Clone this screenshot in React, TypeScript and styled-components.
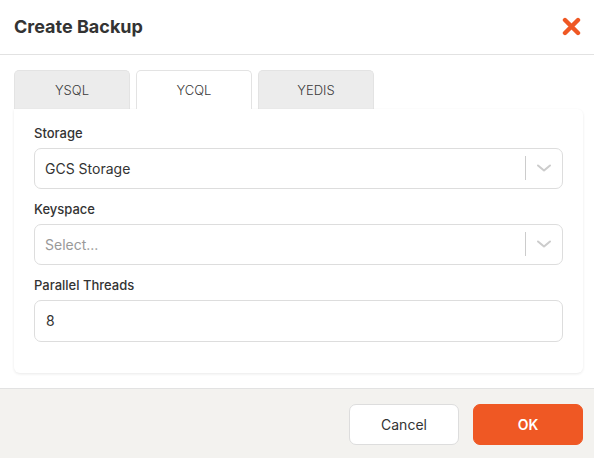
import React from 'react';
import styled, { createGlobalStyle } from 'styled-components';

const GlobalStyle = createGlobalStyle`
  html, body {
    margin: 0;
    padding: 0;
    background: #ffffff;
  }
  body {
    font-family: Inter, "Noto Sans", "Liberation Sans", sans-serif;
    color: #333333;
  }
  * {
    box-sizing: border-box;
  }
`;

const Modal = styled.div`
  width: 594px;
  height: 458px;
  display: flex;
  flex-direction: column;
  background: #ffffff;
`;

const Header = styled.div`
  height: 55px;
  display: flex;
  align-items: center;
  justify-content: space-between;
  padding: 0 13px 0 14px;
  border-bottom: 1px solid #e2e2e2;
`;

const Title = styled.h4`
  margin: 0;
  font-size: 18px;
  font-weight: 700;
  color: #333333;
`;

const CloseButton = styled.button`
  width: 20px;
  height: 20px;
  padding: 0;
  border: none;
  background: transparent;
  display: flex;
  align-items: center;
  justify-content: center;
  cursor: pointer;
`;

const Body = styled.div`
  flex: 1;
  padding: 15px 11px 15px 14px;
  display: flex;
  flex-direction: column;
`;

const TabList = styled.div`
  display: flex;
  gap: 6px;
  height: 39px;
`;

const Tab = styled.button<{ $active?: boolean }>`
  width: 116px;
  height: 39px;
  border: 1px solid #e3e3e3;
  border-bottom: none;
  border-radius: 5px 5px 0 0;
  background: ${({ $active }) => ($active ? '#ffffff' : '#ececec')};
  font-family: inherit;
  font-size: 13px;
  font-weight: 300;
  color: #3a3a3a;
  cursor: pointer;
  padding: 0;
  position: relative;
  z-index: ${({ $active }) => ($active ? 2 : 0)};
`;

const Panel = styled.div`
  background: #ffffff;
  border-radius: 0 6px 6px 6px;
  box-shadow: 0 1px 3px rgba(0, 0, 0, 0.09);
  padding: 16px 20px 19px 20px;
  position: relative;
  z-index: 1;
`;

const Field = styled.div`
  margin-bottom: 12px;
`;

const Label = styled.label`
  display: block;
  font-size: 13px;
  font-weight: 500;
  line-height: 16px;
  color: #333333;
  margin-bottom: 7px;
`;

const SelectBox = styled.div`
  height: 41px;
  border: 1px solid #dddddd;
  border-radius: 7px;
  display: flex;
  align-items: center;
  background: #ffffff;
`;

const SelectValue = styled.div<{ $placeholder?: boolean }>`
  flex: 1;
  padding-left: 10px;
  font-size: 14px;
  color: ${({ $placeholder }) => ($placeholder ? '#999999' : '#333333')};
`;

const Divider = styled.span`
  width: 1px;
  height: 24px;
  background: #cccccc;
`;

const Indicator = styled.span`
  width: 36px;
  display: flex;
  align-items: center;
  justify-content: center;
`;

const Input = styled.input`
  width: 100%;
  height: 42px;
  border: 1px solid #dddddd;
  border-radius: 7px;
  padding: 0 11px;
  font-family: inherit;
  font-size: 14px;
  color: #333333;
  outline: none;
`;

const Footer = styled.div`
  height: 71px;
  background: #f3f2ef;
  border-top: 1px solid #e2e2e2;
  display: flex;
  justify-content: flex-end;
  align-items: flex-start;
  gap: 14px;
  padding: 15px 11px 0 0;
`;

const Button = styled.button<{ $primary?: boolean }>`
  width: 110px;
  height: 41px;
  border-radius: 7px;
  font-family: inherit;
  font-size: 14px;
  font-weight: ${({ $primary }) => ($primary ? 600 : 400)};
  color: ${({ $primary }) => ($primary ? '#ffffff' : '#333333')};
  background: ${({ $primary }) => ($primary ? '#ef5824' : '#ffffff')};
  border: 1px solid ${({ $primary }) => ($primary ? '#ef5824' : '#dddddd')};
  cursor: pointer;
`;

function Chevron() {
  return (
    <svg width="16" height="16" viewBox="0 0 16 16">
      <path
        d="M2 5.5 L8 10.5 L14 5.5"
        fill="none"
        stroke="#cccccc"
        strokeWidth="2"
        strokeLinecap="round"
        strokeLinejoin="round"
      />
    </svg>
  );
}

function CloseIcon() {
  return (
    <svg width="19" height="19" viewBox="0 0 19 19">
      <path
        d="M3 3 L16 16 M16 3 L3 16"
        stroke="#ef5824"
        strokeWidth="4.4"
        strokeLinecap="round"
      />
    </svg>
  );
}

function Select({ value, placeholder }: { value?: string; placeholder?: string }) {
  return (
    <SelectBox>
      <SelectValue $placeholder={!value}>{value ?? placeholder}</SelectValue>
      <Divider />
      <Indicator>
        <Chevron />
      </Indicator>
    </SelectBox>
  );
}

export default function App() {
  return (
    <>
      <GlobalStyle />
      <Modal>
        <Header>
          <Title>Create Backup</Title>
          <CloseButton aria-label="Close">
            <CloseIcon />
          </CloseButton>
        </Header>
        <Body>
          <TabList>
            <Tab>YSQL</Tab>
            <Tab $active>YCQL</Tab>
            <Tab>YEDIS</Tab>
          </TabList>
          <Panel>
            <Field>
              <Label>Storage</Label>
              <Select value="GCS Storage" />
            </Field>
            <Field>
              <Label>Keyspace</Label>
              <Select placeholder="Select..." />
            </Field>
            <Field>
              <Label>Parallel Threads</Label>
              <Input defaultValue="8" />
            </Field>
          </Panel>
        </Body>
        <Footer>
          <Button>Cancel</Button>
          <Button $primary>OK</Button>
        </Footer>
      </Modal>
    </>
  );
}
